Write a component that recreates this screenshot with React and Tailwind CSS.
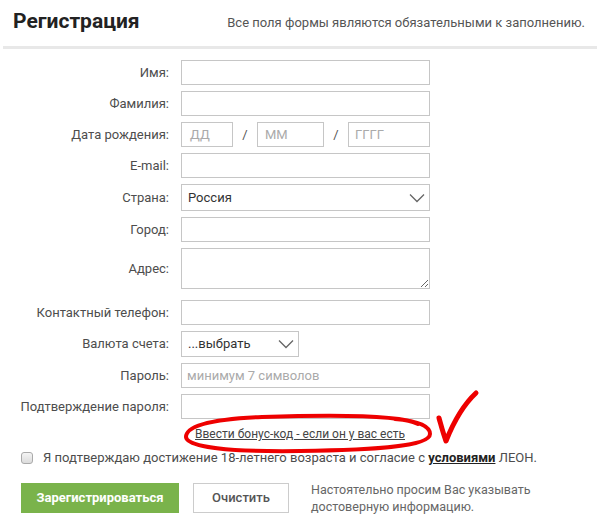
import React from 'react';

const inputCls = 'h-[25px] border border-[#c6c6c6] bg-white';
const labelCls = 'w-[169px] shrink-0 text-right text-[13px] text-[#4d4d4d]';

const Chevron = ({ className }) => (
  <svg className={className} width="16" height="10" viewBox="0 0 16 10" fill="none">
    <path d="M1 1.5 L8 8.5 L15 1.5" stroke="#666" strokeWidth="1.3" />
  </svg>
);

const Row = ({ label, children, className = '' }) => (
  <div className={`flex items-center ${className}`}>
    <label className={labelCls}>{label}</label>
    <div className="ml-[12px] flex items-center">{children}</div>
  </div>
);

export default function App() {
  return (
    <div className="relative w-[600px] h-[520px] overflow-hidden bg-white font-['Roboto',sans-serif]">
      <div className="mx-[3px] flex items-center justify-between border-b-[3px] border-[#e8e8e8] pl-[10px] pr-[12px] h-[49px]">
        <h1 className="text-[21px] font-bold text-[#222] leading-none pb-[3px]">Регистрация</h1>
        <p className="text-[13px] text-[#555] pb-[1px]">Все поля формы являются обязательными к заполнению.</p>
      </div>

      <div className="mt-[11px] flex flex-col gap-[6px]">
        <Row label="Имя:"><div className={`${inputCls} w-[249px]`} /></Row>
        <Row label="Фамилия:"><div className={`${inputCls} w-[249px]`} /></Row>
        <Row label="Дата рождения:">
          <div className={`${inputCls} w-[52px] flex items-center pl-[8px] text-[13px] text-[#aaa]`}>ДД</div>
          <span className="w-[24px] text-center text-[13px] text-[#555]">/</span>
          <div className={`${inputCls} w-[67px] flex items-center pl-[7px] text-[13px] text-[#aaa]`}>ММ</div>
          <span className="w-[24px] text-center text-[13px] text-[#555]">/</span>
          <div className={`${inputCls} w-[82px] flex items-center pl-[6px] text-[13px] text-[#aaa]`}>ГГГГ</div>
        </Row>
        <Row label="E-mail:"><div className={`${inputCls} w-[249px]`} /></Row>
        <Row label="Страна:">
          <div className="h-[27px] w-[249px] border border-[#c6c6c6] flex items-center justify-between pl-[6px] pr-[4px] text-[13px] text-[#333]">
            <span>Россия</span>
            <Chevron />
          </div>
        </Row>
        <Row label="Город:"><div className={`${inputCls} w-[249px]`} /></Row>
        <Row label="Адрес:">
          <textarea className="block h-[41px] w-[249px] border border-[#c6c6c6] resize" />
        </Row>
        <Row label="Контактный телефон:" className="mt-[5px]"><div className={`${inputCls} w-[249px]`} /></Row>
        <Row label="Валюта счета:">
          <div className="h-[26px] w-[118px] border border-[#c6c6c6] flex items-center justify-between pl-[6px] pr-[4px] text-[13px] text-[#333]">
            <span>...выбрать</span>
            <Chevron />
          </div>
        </Row>
        <Row label="Пароль:">
          <div className={`${inputCls} w-[249px] flex items-center pl-[5px] text-[13px] text-[#aaa]`}>минимум 7 символов</div>
        </Row>
        <Row label="Подтверждение пароля:"><div className={`${inputCls} w-[249px]`} /></Row>
      </div>

      <div className="mt-[6px] pl-[195px] leading-[16px]">
        <a href="#" className="text-[12px] text-[#444] underline">Ввести бонус-код - если он у вас есть</a>
      </div>

      <div className="mt-[8px] flex items-center pl-[21px] leading-[16px]">
        <span className="h-[12px] w-[12px] rounded-[3px] border border-[#aaa] bg-gradient-to-b from-[#f4f4f4] to-[#dcdcdc]" />
        <span className="ml-[10px] text-[13px] text-[#4d4d4d]">
          Я подтверждаю достижение 18-летнего возраста и согласие с{' '}
          <a href="#" className="text-[#222] font-bold underline">условиями</a> ЛЕОН.
        </span>
      </div>

      <div className="mt-[15px] flex items-center pl-[21px]">
        <button className="h-[30px] w-[158px] bg-[#7ab34b] text-white text-[13px] font-bold">Зарегистрироваться</button>
        <button className="ml-[14px] h-[30px] w-[96px] border border-[#ccc] bg-white text-[13px] font-medium text-[#555]">Очистить</button>
        <p className="ml-[22px] text-[12.5px] leading-[17px] text-[#666]">
          Настоятельно просим Вас указывать<br />достоверную информацию.
        </p>
      </div>

      <svg className="pointer-events-none absolute left-0 top-0" width="600" height="520" viewBox="0 0 600 520" fill="none">
        <path
          d="M418 424 C400 414 320 415 262 417 C210 419 186 426 186 437 C187 447 230 452 300 451 C370 450 430 447 430 434 C430 426 418 421 395 419"
          stroke="#ee0000"
          strokeWidth="4"
          strokeLinecap="round"
        />
        <path
          d="M439 418 C441 425 443 433 446 441 C452 426 462 406 476 393"
          stroke="#ee0000"
          strokeWidth="5"
          strokeLinecap="round"
          strokeLinejoin="round"
        />
      </svg>
    </div>
  );
}
